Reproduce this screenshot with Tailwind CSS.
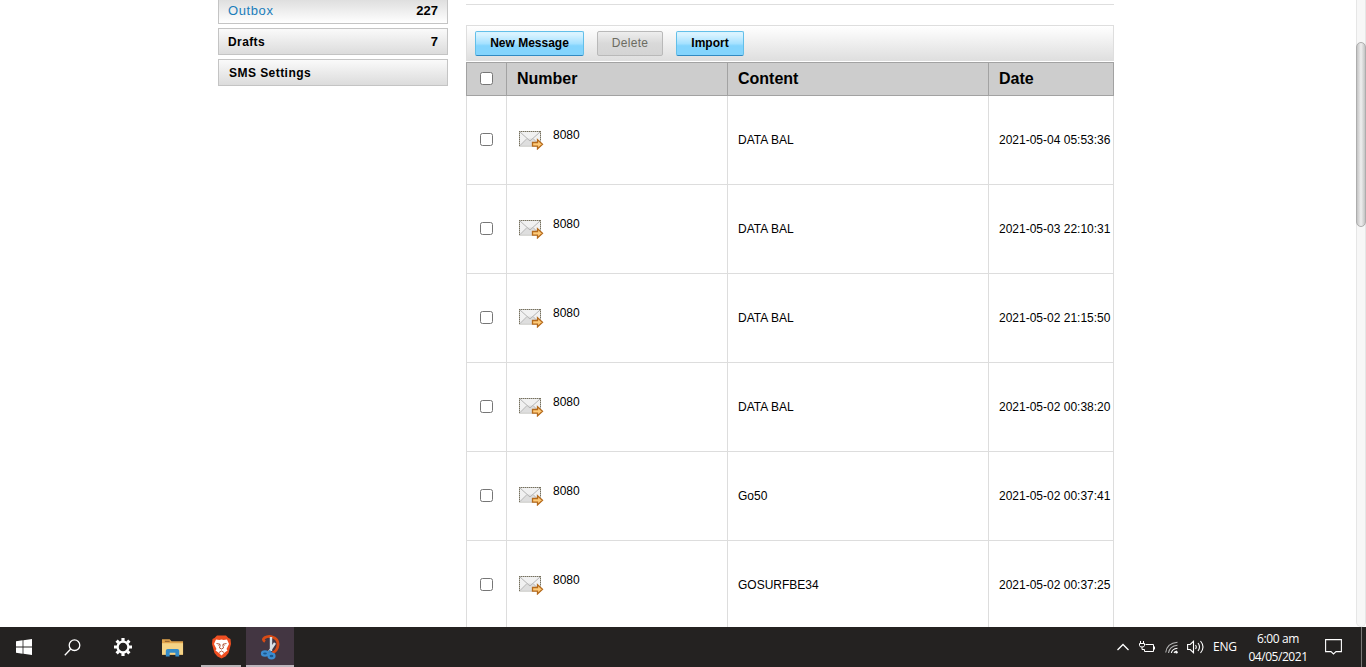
<!DOCTYPE html>
<html lang="en">
<head>
<meta charset="utf-8">
<title>Outbox</title>
<script src="https://cdn.jsdelivr.net/npm/@tailwindcss/browser@4"></script>
</head>
<body class="h-[667px] w-[1366px] overflow-hidden bg-white font-['Liberation_Sans',Arial,sans-serif] text-xs text-black">
<svg class="hidden">
  <symbol id="mail" viewBox="0 0 26 20">
    <rect x="1.500" y="1.500" width="21" height="14.500" fill="#f1f1f1" stroke="#b4b4ae"/>
    <path d="M2 15.500 9.500 8.500h5L22 15.500z" fill="#dedede"/>
    <path d="M2 2l10 9L22 2M2 15.500l7-7M22 15.500l-7-7" fill="none" stroke="#b5b5b5" stroke-width="1"/>
    <path d="M1 1.500h22M1.500 1v15.500M22.500 1v9" stroke="#77705c" stroke-dasharray="1 1" fill="none"/>
    <path d="M14.500 12.500h5v-2.800l5 4.600-5 4.600v-2.800h-5z" fill="#ffcb78" stroke="#b56a1c" stroke-width="1.300"/>
  </symbol>
</svg>
<div class="flex h-full flex-col">
  <main class="flex h-[627px] justify-between overflow-hidden">
    <div class="flex pl-[218px]">
      <nav class="-mt-[3px] mr-[18px] flex w-[230px] flex-col gap-1 text-[13px] font-bold leading-[25px]">
        <a class="flex h-[27px] shrink-0 justify-between border border-[#c4c4c4] bg-linear-to-b from-[#dcdcdc] to-white pl-[9px] pr-[9px]"><span class="font-normal tracking-[0.6px] text-[#1a7dbb]">Outbox</span><span>227</span></a>
        <a class="flex h-[27px] shrink-0 justify-between border border-[#c4c4c4] bg-linear-to-b from-[#fafafa] to-[#dcdcdc] pl-[9px] pr-[9px]"><span class="text-xs leading-[26px] tracking-[0.4px]">Drafts</span><span>7</span></a>
        <a class="flex h-[27px] shrink-0 justify-between border border-[#c4c4c4] bg-linear-to-b from-[#fafafa] to-[#dcdcdc] pl-[10px] pr-[9px]"><span class="text-xs leading-[26px] tracking-[0.45px]">SMS Settings</span></a>
      </nav>
      <section class="w-[648px]">
        <div class="h-[5px] border-b border-[#dedede]"></div>
        <div class="mt-5 flex h-9 items-start border border-b-0 border-[#dedede] bg-linear-to-b from-white to-[#dedede] pl-2 pt-[5px] font-bold">
          <button class="h-[25px] w-[109px] rounded-[2px] border border-[#62bfe9] border-b-[#318ac2] bg-linear-to-b from-[#d9f3ff] from-10% via-[#a5e1ff] via-50% to-[#83d4fd] to-60% pb-[2px]">New Message</button>
          <button class="ml-[13px] h-[25px] w-[66px] rounded-[2px] border border-[#b9b9b9] bg-linear-to-b from-[#eeeeee] via-[#d9d9d9] via-50% to-[#d4d4d4] pb-[2px] font-normal text-[#6c6c62]"><span class="tracking-[0.3px]">Delete</span></button>
          <button class="ml-[13px] h-[25px] w-[68px] rounded-[2px] border border-[#62bfe9] border-b-[#318ac2] bg-linear-to-b from-[#d9f3ff] from-10% via-[#a5e1ff] via-50% to-[#83d4fd] to-60% pb-[2px]">Import</button>
        </div>
        <table class="mt-px w-[648px] table-fixed border-separate border-spacing-0 text-left">
          <colgroup><col class="w-[41px]"><col class="w-[221px]"><col class="w-[261px]"><col class="w-[125px]"></colgroup>
          <thead>
            <tr class="h-[34px] bg-[#cdcdcd] text-base leading-6">
              <th class="border border-[#a2a2a2] p-0 pb-0.5"><span class="mx-auto block size-[13px] rounded-[2.500px] border border-[#767676] bg-white"></span></th>
              <th class="border-y border-r border-[#a2a2a2] py-0 pr-0 pl-2.5">Number</th>
              <th class="border-y border-r border-[#a2a2a2] py-0 pr-0 pl-2.5">Content</th>
              <th class="border-y border-r border-[#a2a2a2] py-0 pr-0 pl-2.5">Date</th>
            </tr>
          </thead>
          <tbody id="rows"></tbody>
        </table>
      </section>
    </div>
    <div class="w-2.5 rounded-b-[5px] border-x border-b border-[#e6e6e6] bg-[#f7f7f7] pt-[42px]">
      <div class="-mx-px h-[185px] rounded-[5px] border border-[#adadad] bg-linear-to-r from-[#c4c4c4] via-[#efefef] to-[#c4c4c4]"></div>
    </div>
  </main>
  <footer class="flex h-10 items-stretch justify-between bg-[#242221] font-['Open_Sans','Noto_Sans',sans-serif] text-white">
    <div class="flex">
      <div class="flex w-12 items-center justify-center"><svg class="size-4" viewBox="0 0 16 16" fill="#fff"><path d="M0 2.200 6.600 1.300v6.300H0zM7.400 1.200 16 0v7.600H7.400zM0 8.400h6.600v6.300L0 13.800zM7.400 8.400H16V16l-8.600-1.200z"/></svg></div>
      <div class="flex w-12 items-center justify-center"><svg class="h-[17px] w-[17px]" viewBox="0 0 17 17" fill="none" stroke="#fff" stroke-width="1.300"><circle cx="10.500" cy="6.200" r="5.300"/><path d="M6.700 10 .8 16.200"/></svg></div>
      <div class="flex w-[53px] items-center justify-center"><svg class="size-[18px]" viewBox="-9 -9 18 18" fill="none" stroke="#fff"><circle r="5.400" stroke-width="2.300"/><path d="M0-6V-9M0 6V9M-6 0H-9M6 0H9M-4.400-4.400l-2-2M4.400-4.400l2-2M-4.400 4.400l-2 2M4.400 4.400l2 2" stroke-width="3.200"/></svg></div>
      <div class="flex w-[47px] items-center justify-center"><svg class="h-[19px] w-[22px]" viewBox="0 0 23 19"><path d="M0 1h8l2 2h12v14H0z" fill="#e0a44c"/><path d="M0 5h22v12H0z" fill="#f5d487"/><path d="M3 3h5" stroke="#83552b"/><path d="M4 19v-6q0-2 2-2h10q2 0 2 2v6h-4v-4H8v4z" fill="#348cc9"/></svg></div>
      <div class="flex w-[50px] flex-col items-center justify-end"><svg class="mb-[6px] h-6 w-[21px]" viewBox="0 0 20 24"><path d="M5.500.500h9L17 3l2 1 .5 5-2.500 9-3 3.500-4 2-4-2L3 18 .500 9 1 4l2-1z" fill="#ef4f22"/><path d="m4.500 4.500 3.500.500 2-.500 2 .500 3.500-.500L17.500 9 15 14l1 1.500-3.500 2.500L10 20.500 7.500 18 4 15.500 5 14 2.500 9z" fill="#fff"/><path d="m5 8.500 3.500.700L7 10.500M15 8.500l-3.500.700 1.500 1.300M8.800 9.500l-.8 3.500 2 1 2-1-.8-3.500M7.500 17.500l2.500-1.500 2.500 1.500" fill="none" stroke="#b35b40" stroke-width="1"/></svg><div class="h-0.5 w-10 bg-[#b9b5b8]"></div></div>
      <div class="flex w-12 flex-col items-center justify-end bg-[#433642]"><svg class="mb-[5px] h-[25px] w-[21px]" viewBox="0 0 20 25"><path d="M4.500 6.500Q1.500 4.500 4 2.800 8 .500 12 2q6 2 5.500 8-.5 6-6 8" fill="none" stroke="#d84b15" stroke-width="2.800"/><path d="M10.500 2v14M14.500 8l-6 9" stroke="#d9e0e4" stroke-width="2.400"/><path d="m8.500 15.500 2.500 3" stroke="#3480c5" stroke-width="2"/><ellipse cx="4.500" cy="18.500" rx="3" ry="2.200" fill="#1c568d" stroke="#3c8dd2" stroke-width="2.200"/><ellipse cx="11" cy="21" rx="3" ry="2.300" fill="#1c568d" stroke="#3c8dd2" stroke-width="2.200"/></svg><div class="h-0.5 w-full bg-[#bdb6bd]"></div></div>
    </div>
    <div class="flex items-center">
      <svg class="h-2 w-3" viewBox="0 0 12 8" fill="none" stroke="#fff" stroke-width="1.300"><path d="m.5 7 5.500-5.500L11.500 7"/></svg>
      <svg class="ml-2.5 h-3 w-[17px]" viewBox="0 0 17 12" fill="none" stroke="#fff"><path d="M6.500 3.500h8v7h-9v-2M15.500 5.500v3M1.500 0v2.500M4.500 0v2.500M.500 2.500h5v2q0 1.500-2.500 1.500T.500 4.500zM3 6v2.500h2.500"/></svg>
      <svg class="ml-[9px] h-[13px] w-[14px]" viewBox="0 0 14 13" fill="none" stroke="#fff" stroke-width="1.100"><g stroke="#b5b5b5"><path d="M.7 11.500Q2 2 12.500 1.200M3.500 12Q4.500 5 12.500 4.200"/></g><path d="M6.300 12Q7 7.800 12.500 7.200"/><path d="M9 12q.5-1.800 3-2" /><circle cx="11.500" cy="11.300" r="1.200" fill="#fff" stroke="none"/></svg>
      <svg class="ml-2 h-[14px] w-[17px]" viewBox="0 0 17 14" fill="none" stroke="#fff" stroke-width="1.100"><path d="M.6 4.500h2.600L6.500 1.300v11.400L3.200 9.500H.6zM8.500 5q1.500 2 0 4M11 3q3 4 0 8M13.500 1q5 6 0 12"/></svg>
      <span class="ml-[9px] w-[24px] text-[12px] tracking-[-0.2px]">ENG</span>
      <div class="ml-[8px] w-[66px] pt-px text-center text-xs leading-[18px] whitespace-nowrap"><div class="tracking-[-0.4px]">6:00 am</div><div class="tracking-[-0.45px]">04/05/2021</div></div>
      <svg class="ml-[14px] h-4 w-[17px]" viewBox="0 0 17 16" fill="none" stroke="#fff" stroke-width="1.100"><path d="M.6.600h15.800v12H11L8.500 15 6 12.600H.6z"/></svg>
      <div class="ml-[19px] h-full w-[5px] border-l border-[#7a7877]"></div>
    </div>
  </footer>
</div>
<script>
const messages = [
  ['DATA BAL', '2021-05-04 05:53:36'],
  ['DATA BAL', '2021-05-03 22:10:31'],
  ['DATA BAL', '2021-05-02 21:15:50'],
  ['DATA BAL', '2021-05-02 00:38:20'],
  ['Go50', '2021-05-02 00:37:41'],
  ['GOSURFBE34', '2021-05-02 00:37:25']
];
document.getElementById('rows').innerHTML = messages.map(([content, date]) => `
  <tr class="h-[89px]">
    <td class="border-x border-b border-[#dddddd] p-0 pb-0.5"><span class="mx-auto block size-[13px] rounded-[2.500px] border border-[#767676] bg-white"></span></td>
    <td class="border-r border-b border-[#dddddd] py-0 pr-0 pl-[11px]"><div class="flex items-start pb-[3px]"><svg class="mt-[3px] h-5 w-[26px]"><use href="#mail"/></svg><span class="ml-[9px]">8080</span></div></td>
    <td class="border-r border-b border-[#dddddd] py-0 pr-0 pl-2.5">${content}</td>
    <td class="border-r border-b border-[#dddddd] py-0 pr-0 pl-2.5 whitespace-nowrap">${date}</td>
  </tr>`).join('');
</script>
</body>
</html>
